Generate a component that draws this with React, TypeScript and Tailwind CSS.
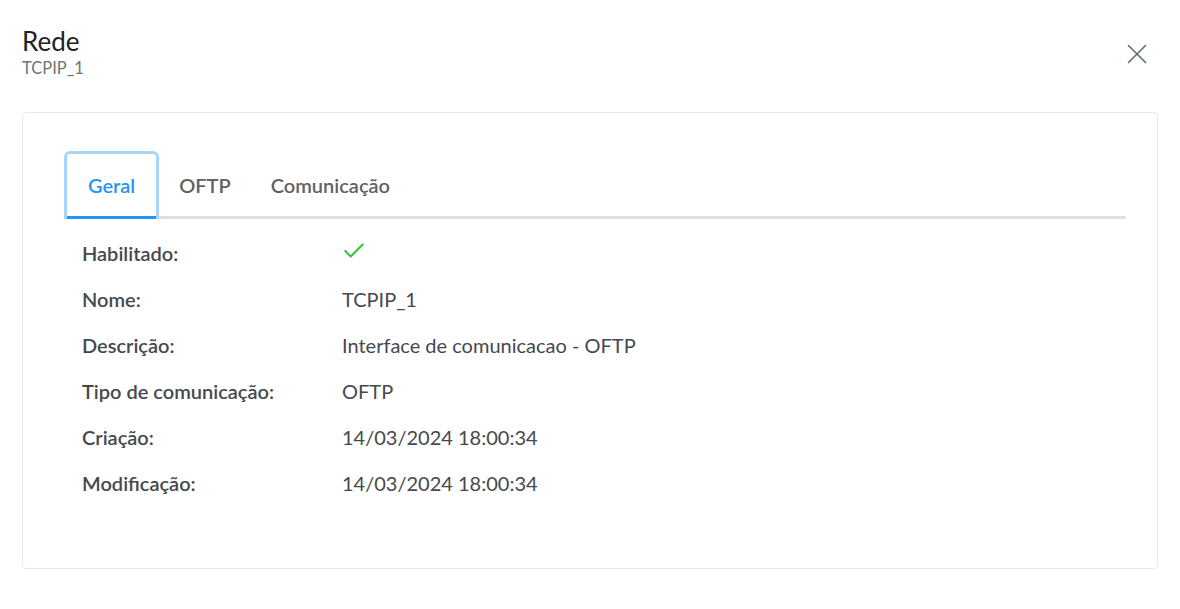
import { Check, X } from "lucide-react";

const rows = [
  { label: "Habilitado:", value: null },
  { label: "Nome:", value: "TCPIP_1" },
  { label: "Descrição:", value: "Interface de comunicacao - OFTP" },
  { label: "Tipo de comunicação:", value: "OFTP" },
  { label: "Criação:", value: "14/03/2024 18:00:34" },
  { label: "Modificação:", value: "14/03/2024 18:00:34" },
];

const tabs = ["Geral", "OFTP", "Comunicação"];

export default function App() {
  return (
    <main
      className="w-[1180px] h-[609px] bg-white px-[22px] pt-[25px]"
      style={{ fontFamily: "Lato, 'Open Sans', sans-serif" }}
    >
      <div className="flex items-start justify-between">
        <div>
          <h1 className="text-[26px] leading-[33px] text-[#222]">Rede</h1>
          <p className="text-[16.5px] leading-[20px] text-[#737373]">TCPIP_1</p>
        </div>
        <button className="mt-[12px] mr-[4px] text-[#5a6b75]">
          <X size={34} strokeWidth={1.1} />
        </button>
      </div>

      <section className="mt-[34px] h-[457px] rounded border border-[#e8e8e8] pl-[41px] pr-[31px] pt-[38px]">
        <div className="flex border-b-[3px] border-[#dee2e6]">
          {tabs.map((t, i) => (
            <div
              key={t}
              className={
                i === 0
                  ? "-mb-[3px] h-[68px] rounded-t-[6px] border-[3px] border-b-0 border-[#a6d4fa] px-[21px]"
                  : "-mb-[3px] h-[68px] border-[3px] border-b-0 border-transparent px-[17px]"
              }
            >
              <div
                className={
                  i === 0
                    ? "flex h-full items-center border-b-[3px] border-[#2196f3] -mx-[21px] px-[21px] text-[20px] font-semibold text-[#2196f3]"
                    : "flex h-full items-center border-b-[3px] border-transparent text-[20px] font-semibold text-[#5f6266]"
                }
              >
                {t}
              </div>
            </div>
          ))}
        </div>

        <div className="mt-[11px] pl-[18px]">
          {rows.map((r) => (
            <div key={r.label} className="flex h-[46px] items-center text-[20px] text-[#45494d]">
              <span className="w-[260px] font-semibold">{r.label}</span>
              {r.value === null ? (
                <Check size={26} strokeWidth={2} className="-mt-[4px] -ml-[1px] text-[#3ec43e]" />
              ) : (
                <span>{r.value}</span>
              )}
            </div>
          ))}
        </div>
      </section>
    </main>
  );
}
